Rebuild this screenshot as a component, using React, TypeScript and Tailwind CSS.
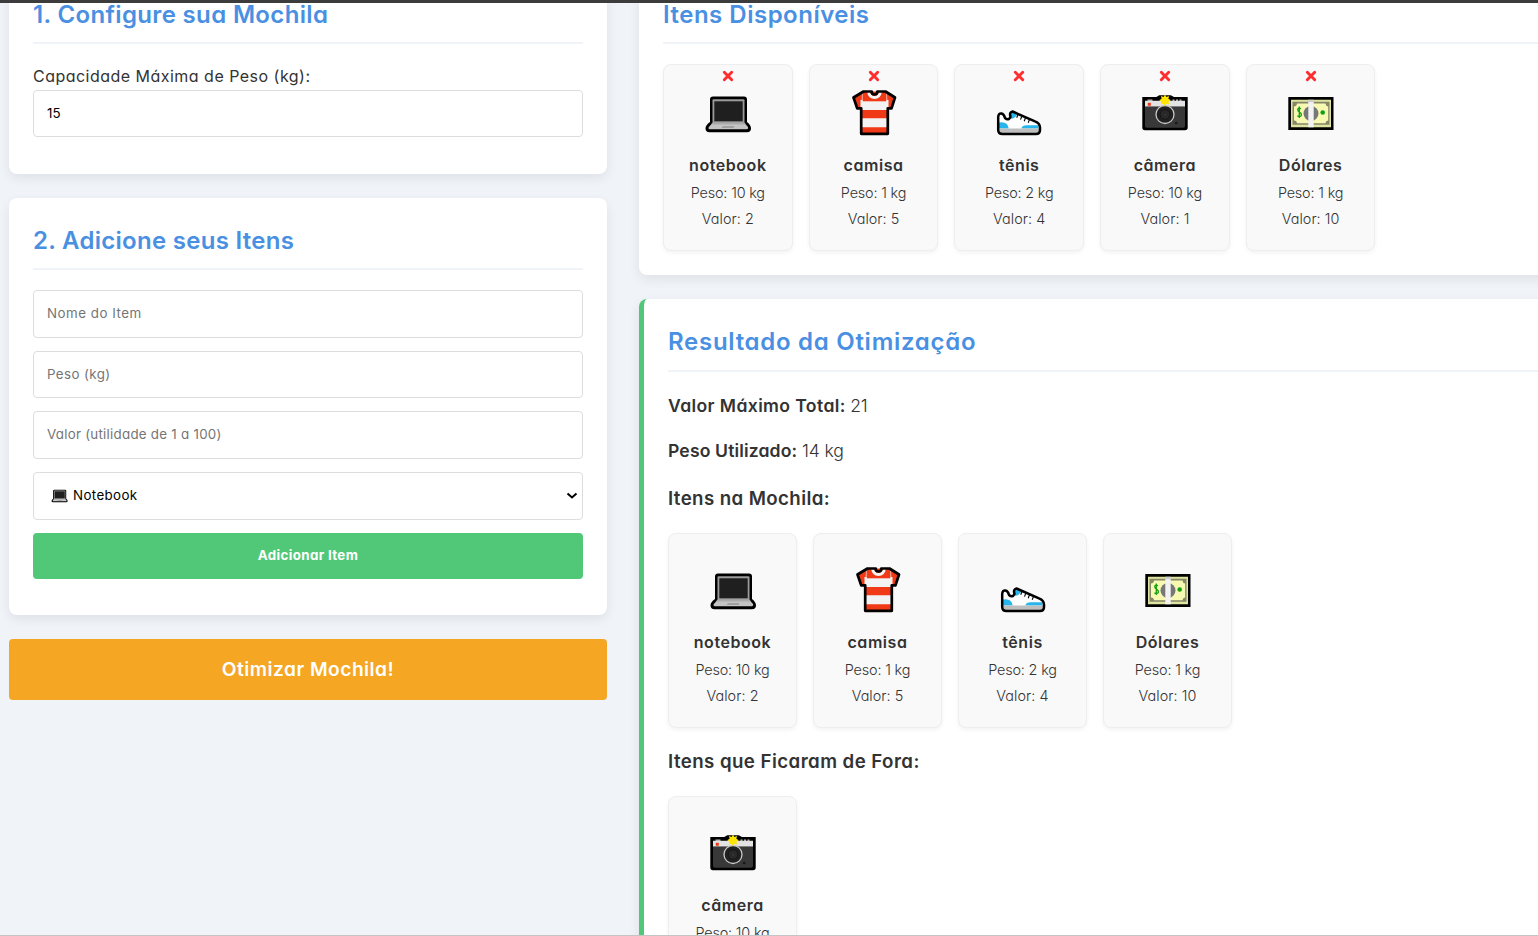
import React from "react";

type Kind = "laptop" | "shirt" | "shoe" | "camera" | "money";

function Laptop() {
  return (
    <>
      <path d="M6 10.500q0-3 3-3h31q3 0 3 3V33q4 3 4 6.500t-4 3.700H5.500q-4-.2-4-3.700T6 33z" fill="#000" />
      <rect x="8.500" y="10.200" width="32" height="24" rx="1" fill="#9b9b9b" />
      <rect x="10.300" y="12.300" width="28.400" height="20" fill="#1f1f1f" />
      <path d="M8.500 34h32l3.500 4q.8 2-1 2.300H5.800q-2-.3-1-2.300z" fill="#c4c4c4" />
      <path d="M8.500 33.500h32l1.500 2H7z" fill="#aaaaaa" />
      <path d="M19 37h11.500l-1 2h-12z" fill="#a0a0a0" />
    </>
  );
}

function Shirt() {
  return (
    <>
      <path d="M13.500 2.500H21q3.500 5 7 0h7L45 8l-4 11.500h-3.500V45H11.500V19.500H7.500L3 8z" fill="#f3f3f3" />
      <path d="M12.500 2.500h24v9.800h-24z" fill="#f03a17" />
      <path d="M12 4 3 8.500l3 9.500h5.500zM37 4l8 4.500-3 9.500h-4.500z" fill="#f03a17" />
      <path d="M11.500 21h26v8.300h-26zM11.500 38.300h26V45h-26z" fill="#f03a17" />
      <path d="M11.500 11v8M37.500 11v8" stroke="#f3f3f3" strokeWidth="2" />
      <path d="M18.500 2.500q.8 6 6 6t6-6" fill="none" stroke="#f3f3f3" strokeWidth="2.800" />
      <path d="M13.500 2.500h8.200q0 3 2.800 3t2.800-3h8.200L45 8.500l-3.500 10.800h-3.700v25.500H11.200V19.300H7.200L3.500 8.500z" fill="none" stroke="#000" strokeWidth="2.700" strokeLinejoin="round" />
    </>
  );
}

function Shoe() {
  return (
    <>
      <path d="M3.200 28q.3-4 3.300-3.500 2.500.5 3.500 4.500 3.500 3 5.500-1-1.500-4.700 2-5.500L40 32.300q5 2 5 6.200v2.500q0 4-4 4H7.500q-4.300 0-4.300-4z" fill="#fff" />
      <path d="M4 33.500q8.500-1.500 9.700 6H4zM15.500 23.500l3-.5 3.500 3q-3 4.500-7 3.500zM26.500 39q1-2.800 5-2.800h12v3.300H27z" fill="#26b5ec" />
      <path d="M4.200 39.500H44V44H6q-1.800 0-1.800-2z" fill="#bebebe" />
      <path d="M3.200 28q.3-4 3.300-3.500 2.500.5 3.500 4.500 3.500 3 5.500-1-1.500-4.700 2-5.500L40 32.300q5 2 5 6.200v2.500q0 4-4 4H7.500q-4.300 0-4.300-4z" fill="none" stroke="#000" strokeWidth="2.500" strokeLinejoin="round" />
      <path d="m23 25.500-1.300 3.300M26.800 27.300l-1.300 3.300M30.500 28.800l-1.300 3.400M34.500 30.500l-1.300 3.200" stroke="#000" strokeWidth="1.100" />
    </>
  );
}

function Camera() {
  return (
    <>
      <path d="M1.300 8h14l3-1.700h11.500L33 8h13.700v30.500q0 2.700-2.700 2.700H4q-2.700 0-2.700-2.700z" fill="#000" />
      <path d="M4 17.500h40V37q0 1.700-1.700 1.700H5.700Q4 38.700 4 37z" fill="#383838" />
      <path d="M4 11.800h40v5.700H4z" fill="#e3e3e3" />
      <path d="M6.500 10.600h5v1.500h-5zM31.500 10.600h2v1.500h-2zM35 10.600h2v1.500h-2zM38.500 10.600h2v1.500h-2z" fill="#bbb" />
      <rect x="6.800" y="13.800" width="3" height="3" fill="#f03a17" />
      <circle cx="24" cy="25.500" r="9" fill="#202020" stroke="#c9c9c9" strokeWidth="1.300" />
      <circle cx="24" cy="25.500" r="4.800" fill="#292929" stroke="#171717" />
      <circle cx="24.300" cy="25.700" r=".8" fill="#444" />
      <circle cx="35.200" cy="34" r="1.300" fill="#171717" />
      <path d="m24 5.600 1.300 2.500 2.700-1.100-.6 2.700 2.400 1.600-2.400 1.500.8 2.600-2.700-.7L24 17l-1.500-2.300-2.700.7.8-2.600-2.400-1.500 2.400-1.600L20 7l2.700 1.100z" fill="#ffe600" />
    </>
  );
}

function Money() {
  return (
    <>
      <path d="M1.300 8h45.200v33H1.300z" fill="#000" />
      <path d="M4 10.700h40v27.600H4z" fill="#dfe5a0" />
      <path d="M5.500 12.800h37v23h-37z" fill="#868669" />
      <path d="M10 14.500h28.500q.2 2.700 2.700 3v14q-2.500.2-2.700 2.800H10q-.2-2.600-3-2.800v-14q2.800-.3 3-3z" fill="#f7f8b1" />
      <circle cx="24" cy="24.500" r="7.500" fill="#777" />
      <circle cx="35.700" cy="23.500" r="2.300" fill="#12a10e" />
      <path d="M14 19.800q-3-1.700-3.300 1 .1 1.700 2 2.500 2 1 1.700 2.800-.7 2.300-4 .7M12.300 17.600v11.500" fill="none" stroke="#12a10e" strokeWidth="1.300" />
      <path d="M21.300 12h5.400v26.300h-5.400z" fill="#f2f2f2" />
      <path d="M21.300 10.700h5.400v2.500h-5.400z" fill="#cfcfcf" />
    </>
  );
}

const art: Record<Kind, () => React.JSX.Element> = {
  laptop: Laptop,
  shirt: Shirt,
  shoe: Shoe,
  camera: Camera,
  money: Money,
};

function Emoji({ kind, className }: { kind: Kind; className: string }) {
  const Art = art[kind];
  return (
    <svg viewBox="0 0 48 48" className={className} aria-hidden="true">
      <Art />
    </svg>
  );
}

type Item = { name: string; kind: Kind; peso: number; valor: number };

const notebook: Item = { name: "notebook", kind: "laptop", peso: 10, valor: 2 };
const camisa: Item = { name: "camisa", kind: "shirt", peso: 1, valor: 5 };
const tenis: Item = { name: "tênis", kind: "shoe", peso: 2, valor: 4 };
const camera: Item = { name: "câmera", kind: "camera", peso: 10, valor: 1 };
const dolares: Item = { name: "Dólares", kind: "money", peso: 1, valor: 10 };

function ItemCard({ item, removable = false }: { item: Item; removable?: boolean }) {
  return (
    <div
      className={
        "flex shrink-0 flex-col items-center rounded-lg border border-[#eeeeee] bg-[#f9f9f9] shadow-[0_2px_4px_rgba(0,0,0,0.05)] " +
        (removable ? "h-[187px] w-[129.700px]" : "h-[195px] w-[129px] pt-8")
      }
    >
      {removable && (
        <button className="flex h-6 w-6 items-center justify-center pb-[2px]" aria-label="Remover">
          <svg viewBox="0 0 12 12" className="h-3 w-3" aria-hidden="true">
            <path d="m2.300 2.300 7.400 7.400M9.700 2.300 2.300 9.700" stroke="#ff2d2d" strokeWidth="2.900" strokeLinecap="round" />
          </svg>
        </button>
      )}
      <Emoji kind={item.kind} className="h-12 w-12 shrink-0" />
      <strong className="mt-[15px] text-[16px] leading-[26px] font-semibold tracking-[0.550px]">{item.name}</strong>
      <span className="mt-0.5 text-[14.400px] leading-[26px] font-[350] tracking-[-0.170px]">Peso: {item.peso} kg</span>
      <span className="text-[14.400px] leading-[26px] font-[350] tracking-[0.050px]">Valor: {item.valor}</span>
    </div>
  );
}

function Heading({ children, className }: { children: React.ReactNode; className: string }) {
  return (
    <h2
      className={
        "border-b-2 border-[#f0f3f8] text-[24px] leading-[38px] font-semibold whitespace-nowrap text-[#4a90e2] " + className
      }
    >
      {children}
    </h2>
  );
}

const field =
  "w-full rounded border border-[#dddddd] bg-white px-[13px] pb-[2px] text-[13.333px] text-black outline-none placeholder:text-[#757575]";

export default function App() {
  return (
    <div className="flex h-[936px] w-[1538px] flex-col overflow-hidden border-b border-[#c4c4c4] bg-[#f0f3f8] font-['Inter',sans-serif] text-[#333333] [font-feature-settings:'cv11']">
      <div className="z-10 h-[3px] shrink-0 bg-[#3c3c3c]" />
      <main className="-mt-[7px] ml-[9px] flex w-[1600px] items-start gap-8">
        <div className="flex w-[598px] shrink-0 flex-col gap-6">
          <section className="h-[178px] rounded-b-lg bg-white px-6 shadow-[0_4px_12px_rgba(0,0,0,0.08)]">
            <Heading className="pb-2 tracking-[0.350px]">1. Configure sua Mochila</Heading>
            <label className="mt-[19px] mb-px block text-[16px] leading-[26px] tracking-[0.480px]" htmlFor="cap">
              Capacidade Máxima de Peso (kg):
            </label>
            <input id="cap" defaultValue="15" className={field + " h-[47px]"} />
          </section>
          <section className="h-[417px] rounded-lg bg-white p-6 shadow-[0_4px_12px_rgba(0,0,0,0.08)]">
            <Heading className="pb-2 tracking-[0.290px]">2. Adicione seus Itens</Heading>
            <div className="mt-[20.200px] flex flex-col gap-[13px]">
              <input placeholder="Nome do Item" className={field + " h-[47.600px] tracking-[0.500px]"} />
              <input placeholder="Peso (kg)" className={field + " h-[47.600px] tracking-[0.400px]"} />
              <input placeholder="Valor (utilidade de 1 a 100)" className={field + " h-[47.600px] tracking-[0.260px]"} />
              <div className="flex h-[47.600px] items-center rounded border border-[#dddddd] bg-white pr-1 pl-[17px] text-[13.333px] text-black">
                <Emoji kind="laptop" className="mr-[5px] h-[17px] w-[17px]" />
                <span className="tracking-[0.380px]">Notebook</span>
                <svg viewBox="0 0 12 8" className="ml-auto h-2 w-3" aria-hidden="true">
                  <path d="m1.500 1.500 4.500 4 4.500-4" fill="none" stroke="#000" strokeWidth="2" />
                </svg>
              </div>
              <button className="h-[46px] rounded bg-[#50c878] text-[13.333px] font-bold tracking-[0.360px] text-white">
                Adicionar Item
              </button>
            </div>
          </section>
          <button className="h-[61px] rounded bg-[#f5a623] text-[19.200px] font-semibold tracking-[0.480px] text-white">
            Otimizar Mochila!
          </button>
        </div>
        <div className="flex w-[960px] shrink-0 flex-col gap-6">
          <section className="h-[279px] rounded-b-lg bg-white px-6 shadow-[0_4px_12px_rgba(0,0,0,0.08)]">
            <Heading className="pb-2 tracking-[0.500px]">Itens Disponíveis</Heading>
            <div className="mt-5 flex gap-4">
              {[notebook, camisa, tenis, camera, dolares].map((item) => (
                <ItemCard key={item.name} item={item} removable />
              ))}
            </div>
          </section>
          <section className="h-[720px] rounded-lg border-l-[5px] border-[#50c878] bg-white px-6 pt-6 shadow-[0_4px_12px_rgba(0,0,0,0.08)]">
            <Heading className="pb-[9px] tracking-[0.720px]">Resultado da Otimização</Heading>
            <p className="mt-5 text-[17.600px] leading-7 font-[350] tracking-[-0.400px]">
              <strong className="font-semibold tracking-[0.380px]">Valor Máximo Total:</strong> 21
            </p>
            <p className="mt-[17px] text-[17.600px] leading-7 font-[350] tracking-[-0.150px]">
              <strong className="font-semibold tracking-[0.130px]">Peso Utilizado:</strong> 14 kg
            </p>
            <h3 className="mt-[19px] text-[18.700px] leading-[30px] font-semibold tracking-[0.390px]">Itens na Mochila:</h3>
            <div className="mt-[19px] flex gap-4">
              {[notebook, camisa, tenis, dolares].map((item) => (
                <ItemCard key={item.name} item={item} />
              ))}
            </div>
            <h3 className="mt-[19px] text-[18.700px] leading-[30px] font-semibold tracking-[0.430px]">
              Itens que Ficaram de Fora:
            </h3>
            <div className="mt-[19px] flex gap-4">
              <ItemCard item={camera} />
            </div>
          </section>
        </div>
      </main>
    </div>
  );
}
